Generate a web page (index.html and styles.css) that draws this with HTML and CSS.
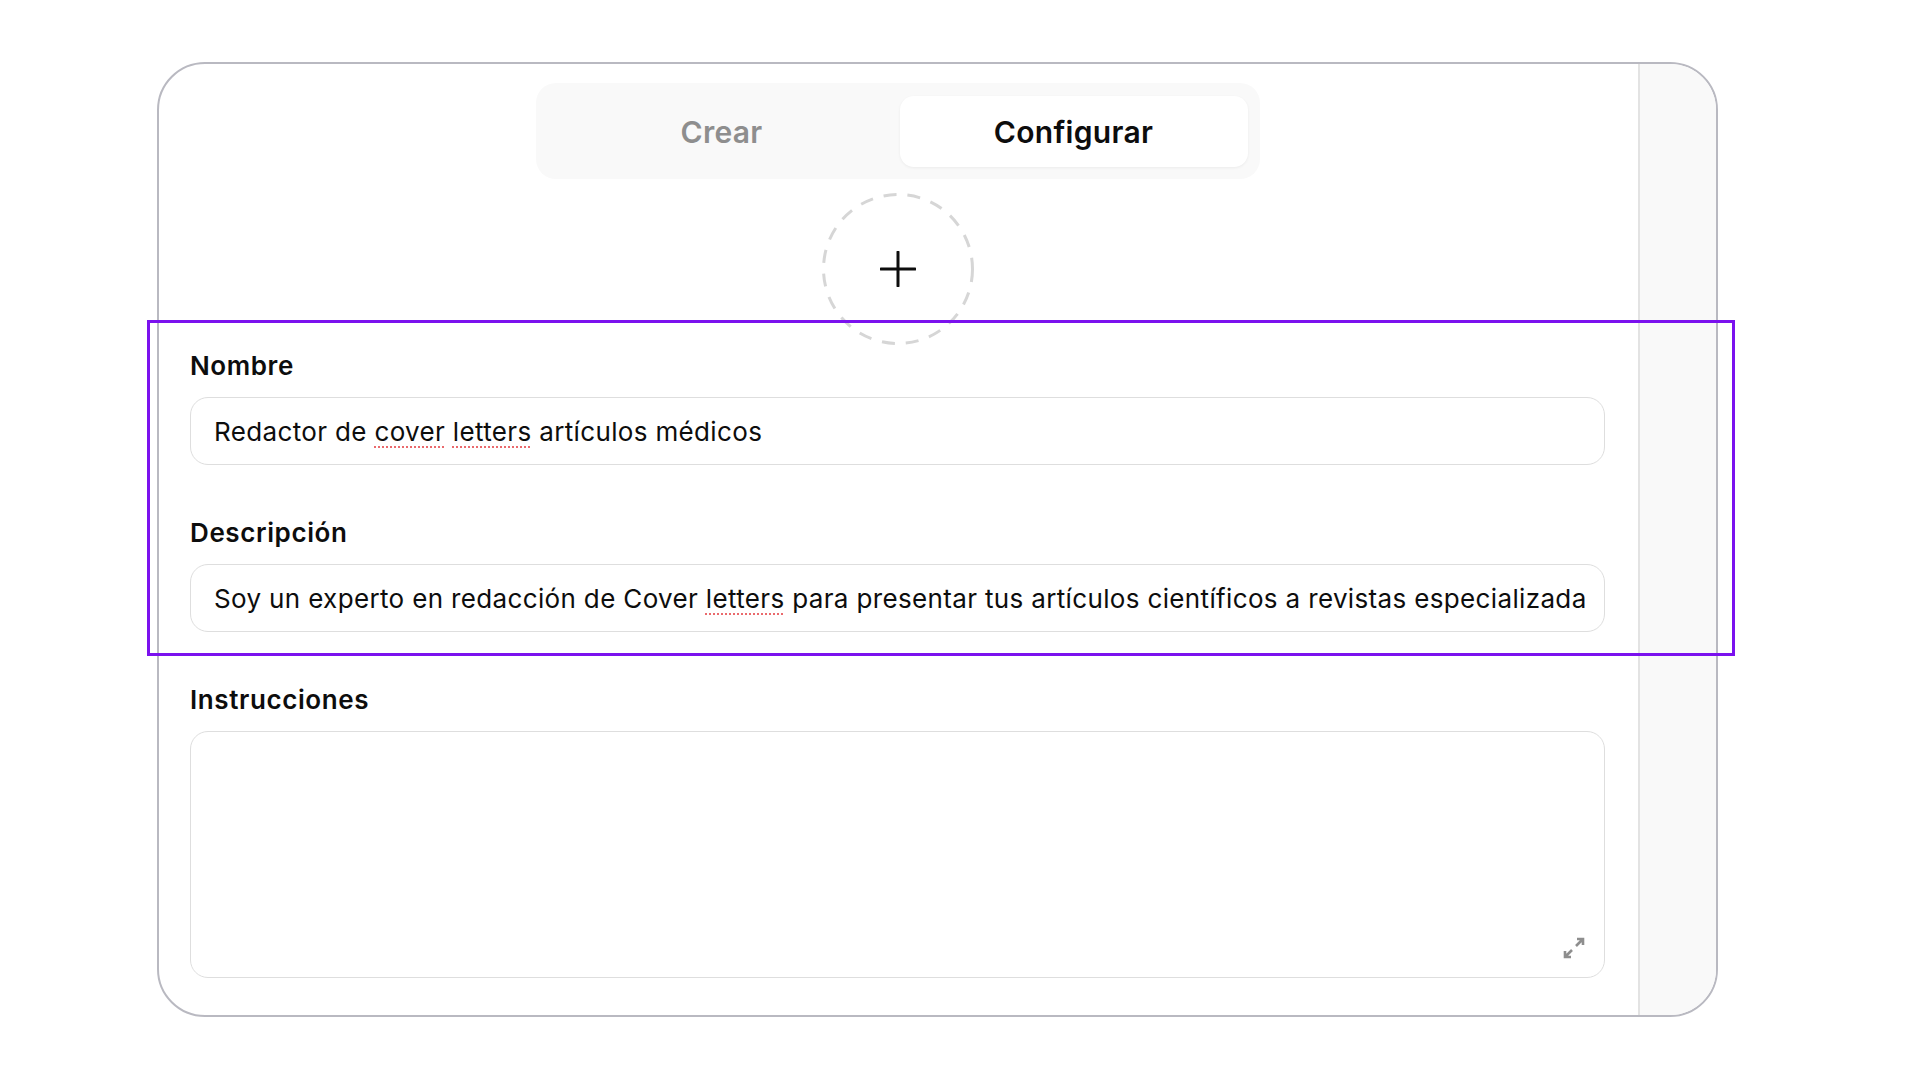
FILE: index.html
```html
<!DOCTYPE html>
<html lang="es">
<head>
  <meta charset="UTF-8">
  <title>Configurar GPT</title>
  <link rel="stylesheet" href="styles.css">
</head>
<body>

<div class="frame">
  <div class="main">
    <div class="tabs">
      <div class="tab">Crear</div>
      <div class="tab active">Configurar</div>
    </div>

    <div class="avatar">
      <svg class="ring" width="152" height="152" viewBox="0 0 152 152">
        <circle cx="76" cy="76" r="74.5" stroke="#d6d6d6" stroke-width="3" stroke-dasharray="13 11" fill="none"/>
      </svg>
      <svg width="36" height="36" viewBox="0 0 36 36">
        <path d="M18 1V35M1 18H35" stroke="#0d0d0d" stroke-width="3" stroke-linecap="round" fill="none"/>
      </svg>
    </div>

    <div class="field">
      <div class="label">Nombre</div>
      <div class="input"><span>Redactor de <span class="typo">cover</span> <span class="typo">letters</span> artículos médicos</span></div>
    </div>

    <div class="field">
      <div class="label">Descripción</div>
      <div class="input"><span>Soy un experto en redacción de Cover <span class="typo">letters</span> para presentar tus artículos científicos a revistas especializada</span></div>
    </div>

    <div class="field">
      <div class="label">Instrucciones</div>
      <div class="textarea">
        <svg width="24" height="24" viewBox="0 0 24 24">
          <path d="M14 10L21 3M15 3H21V9M10 14L3 21M3 15V21H9" stroke="#8e8e8e" stroke-width="2.6" fill="none"/>
        </svg>
      </div>
    </div>
  </div>
  <div class="sidebar"></div>
</div>

<div class="highlight"></div>

</body>
</html>
```

FILE: styles.css
```css
body {
  margin: 0;
  background-color: white;
  font-family: Inter, "Noto Sans", sans-serif;
  color: #0d0d0d;
}
.frame {
  box-sizing: border-box;
  display: flex;
  width: 1561px;
  height: 955px;
  margin: 62px 0 0 157px;
  border: 2px solid #b9b9c1;
  border-radius: 48px;
  overflow: hidden;
}
.main {
  flex: 1;
  min-width: 0;
  padding: 19px 33px 0 31px;
}
.sidebar {
  flex: none;
  width: 76px;
  border-left: 2px solid #e3e3e3;
  background-color: #f9f9f9;
}
.tabs {
  box-sizing: border-box;
  display: grid;
  grid-template-columns: 1fr 1fr;
  gap: 4px;
  width: 724px;
  height: 96px;
  margin: 0 auto;
  padding: 13px 12px 12px 12px;
  background-color: #f9f9f9;
  border-radius: 20px;
}
.tab {
  display: flex;
  align-items: center;
  justify-content: center;
  font-size: 30px;
  font-weight: 600;
  letter-spacing: 0.3px;
  color: #8e8e8e;
  border-radius: 14px;
}
.tab.active {
  background-color: white;
  color: #0d0d0d;
  box-shadow: 0 1px 3px rgba(0,0,0,0.06);
}
.avatar {
  display: grid;
  place-items: center;
  width: 152px;
  height: 152px;
  margin: 14px auto 0;
}
.avatar svg {
  grid-area: 1 / 1;
}
.field {
  margin-top: 53px;
}
.avatar + .field {
  margin-top: 6px;
}
.label {
  font-size: 26px;
  font-weight: 600;
  letter-spacing: 0.6px;
  line-height: 30px;
  margin-bottom: 16px;
}
.input {
  box-sizing: border-box;
  display: flex;
  align-items: center;
  height: 68px;
  padding: 0 14px 0 23px;
  border: 1.5px solid #dedede;
  border-radius: 18px;
  font-size: 26px;
  letter-spacing: 0.35px;
  white-space: nowrap;
  overflow: hidden;
}
.typo {
  text-decoration: underline dotted #ea6a6d;
  text-decoration-thickness: 2px;
  text-underline-offset: 6px;
}
.textarea {
  box-sizing: border-box;
  display: flex;
  align-items: flex-end;
  justify-content: flex-end;
  height: 247px;
  padding: 0 18px 17px 0;
  border: 1.5px solid #dedede;
  border-radius: 18px;
}
.highlight {
  position: absolute;
  left: 147px;
  top: 320px;
  width: 1588px;
  height: 336px;
  box-sizing: border-box;
  border: 3px solid #7b11ee;
}
```
